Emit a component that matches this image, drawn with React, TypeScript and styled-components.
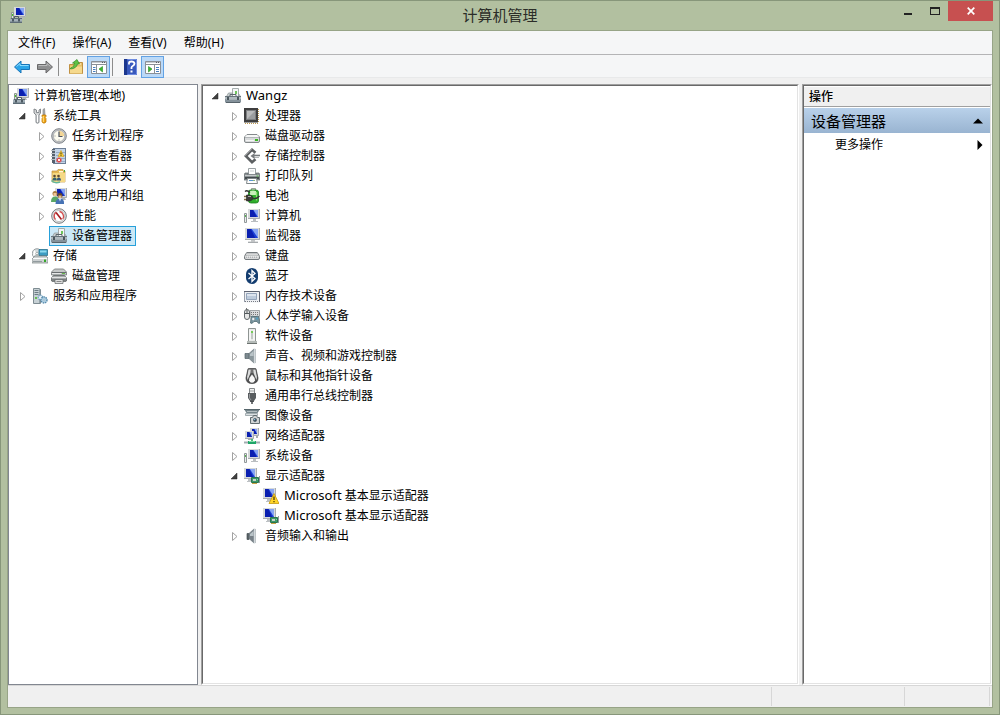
import React from "react";
import styled, { createGlobalStyle } from "styled-components";

const GlobalStyle = createGlobalStyle`
  *, *::before, *::after { box-sizing: border-box; }
  body {
    margin: 0;
    background: #b2c0a0;
    color: #000;
    font-family: "Noto Sans", "Noto Sans CJK SC", sans-serif;
    font-size: 12px;
    line-height: 20px;
  }
  button { font: inherit; color: inherit; background: none; border: 0; padding: 0; margin: 0; }
  h1, h2, ul { margin: 0; padding: 0; font: inherit; list-style: none; }
  svg { display: block; flex: none; }
`;

/* ---------- window frame ---------- */

const Frame = styled.div`
  display: flex;
  flex-direction: column;
  min-height: 100vh;
  padding: 0 6px 6px;
  border: 1px solid #87967a;
  background: #b2c0a0;
`;

const TitleBar = styled.header`
  display: grid;
  grid-template-columns: 1fr auto 1fr;
  height: 29px;
`;

const AppMark = styled.div`
  padding: 6px 0 0 3px;
`;

const Title = styled.h1`
  font-size: 15px;
  line-height: 28px;
  color: #2b2d28;
`;

const Caption = styled.div`
  display: flex;
  justify-content: flex-end;
`;

const CaptionButton = styled.button<{ $close?: boolean }>`
  display: flex;
  align-items: center;
  justify-content: center;
  width: ${(p) => (p.$close ? 45 : 27)}px;
  height: 20px;
  background: ${(p) => (p.$close ? "#c75050" : "transparent")};
`;

const Body = styled.div`
  flex: 1;
  display: flex;
  flex-direction: column;
  border: 1px solid #97a487;
  background: #f0f0f0;
`;

const MenuBar = styled.nav`
  display: flex;
  gap: 1px;
  height: 24px;
  padding: 0 2px;
  border-bottom: 1px solid #b4b4b6;
  background: #f5f6f7;
`;

const MenuButton = styled.button`
  padding: 0 8px;
  line-height: 24px;
`;

const ToolBar = styled.div`
  display: flex;
  align-items: flex-start;
  height: 23px;
  padding: 1px 2px 0;
  background: #f5f6f7;
  box-shadow: inset 0 -1px #e8e9ea;
`;

const ToolButton = styled.button<{ $on?: boolean }>`
  display: flex;
  align-items: center;
  justify-content: center;
  width: 23px;
  height: 22px;
  border: 1px solid ${(p) => (p.$on ? "#62a2e4" : "transparent")};
  background: ${(p) => (p.$on ? "#bbd9f7" : "transparent")};
`;

const ToolDivider = styled.span`
  width: 1px;
  height: 18px;
  margin: 2px 5px 0 2px;
  background: #8c8c8c;
`;

/* ---------- work area ---------- */

const Workspace = styled.div`
  flex: 1;
  display: flex;
  gap: 3px;
  padding-top: 6px;
`;

const SidePane = styled.nav`
  width: 190px;
  flex: none;
  padding: 1px 2px;
  border: 1px solid #828790;
  background: #fff;
`;

const SunkenPane = styled.section<{ $narrow?: boolean }>`
  flex: ${(p) => (p.$narrow ? "none" : "1")};
  width: ${(p) => (p.$narrow ? "190px" : "auto")};
  border: 1px solid;
  border-color: #a0a0a0 #fff #fff #a0a0a0;
  background: #fff;
`;

const SunkenInner = styled.div<{ $padded?: boolean }>`
  height: 100%;
  padding: 0 ${(p) => (p.$padded ? 1 : 0)}px;
  border: 1px solid;
  border-color: #696969 #e3e3e3 #e3e3e3 #696969;
`;

const Row = styled.div`
  display: flex;
  height: 20px;
`;

const Twisty = styled.button<{ $level: number }>`
  width: 19px;
  height: 20px;
  padding-left: 8px;
  margin-left: ${(p) => p.$level * 19}px;
`;

const TwistySpace = styled.span<{ $level: number }>`
  width: 19px;
  margin-left: ${(p) => p.$level * 19}px;
`;

const Label = styled.span<{ $selected?: boolean }>`
  display: flex;
  align-items: center;
  gap: 5px;
  height: 20px;
  padding: 0 3px 0 1px;
  line-height: 18px;
  white-space: nowrap;
  border: 1px solid ${(p) => (p.$selected ? "#26a0da" : "transparent")};
  background: ${(p) => (p.$selected ? "#cbe8f6" : "transparent")};
`;

const Latin = styled.span`
  font-size: 13px;
  line-height: 1;
`;

/* ---------- actions pane ---------- */

const ActionsTitle = styled.h2`
  height: 21px;
  padding: 0 5px;
  line-height: 20px;
  font-weight: 500;
  border-top: 1px solid #fff;
  border-bottom: 1px solid #a0a0a0;
  background: #f0f0f0;
`;

const ActionGroup = styled.button`
  display: flex;
  align-items: center;
  justify-content: space-between;
  width: 100%;
  height: 25px;
  margin-top: 1px;
  padding: 0 7px;
  font-size: 15px;
  background: linear-gradient(#b9d1ea, #99b4d1);
`;

const ActionItem = styled.button`
  display: flex;
  align-items: center;
  justify-content: space-between;
  width: 100%;
  height: 24px;
  padding: 0 7px 0 31px;
`;

const StatusBar = styled.footer`
  display: flex;
  justify-content: flex-end;
  height: 22px;
  padding: 1px 2px 1px 0;
  border-top: 1px solid #d7d7d7;
`;

const StatusCell = styled.span<{ $wide?: boolean }>`
  width: ${(p) => (p.$wide ? 133 : 86)}px;
  border-left: ${(p) => (p.$wide ? "1px solid #d7d7d7" : "0")};
  border-right: ${(p) => (p.$wide ? "0" : "1px solid #d7d7d7")};
  box-shadow: ${(p) => (p.$wide ? "none" : "inset 1px 0 #d7d7d7")};
`;

/* ---------- icons ---------- */

const Svg = ({ children }: { children: React.ReactNode }) => (
  <svg width="16" height="16" viewBox="0 0 16 16" aria-hidden="true">
    {children}
  </svg>
);

const Screen = ({ x = 0, y = 0, w = 12, h = 9 }: { x?: number; y?: number; w?: number; h?: number }) => (
  <g>
    <rect x={x} y={y} width={w} height={h} fill="#d6d9db" />
    <path d={`M${x} ${y + h - 0.5}H${x + w - 0.5}V${y}`} stroke="#a9adb0" fill="none" />
    <rect x={x + 2} y={y + 1} width={w - 4} height={h - 3} fill="#1c3fd6" />
    <path d={`M${x + w * 0.45} ${y + 1}H${x + w - 2}V${y + h - 2}Z`} fill="#86a4f2" />
    <path d={`M${x + 2} ${y + 1}h${w * 0.25}l${w * 0.3} ${h - 3}H${x + 2}z`} fill="#0a1fb0" />
  </g>
);

const ComputerManage = () => (
  <Svg>
    <Screen x={4} y={0} w={12} h={10} />
    <path d="M9 10h4l1 2H8z" fill="#b4b8b8" />
    <path d="M1.500 5.500h2v6h-2z" fill="#dce2dc" stroke="#8d9791" />
    <path d="M2 7h1v2H2z" fill="#46c12a" />
    <path d="M4.500 11V9.500h4V11" fill="none" stroke="#525d67" />
    <path d="M1 11h11v4.500H0V12z" fill="#8796a0" />
    <path d="M1 11.500h11M0 15.500h12" stroke="#5d6c76" />
    <path d="M0 13h12" stroke="#c2ccd2" />
    <path d="M2 12h2v2.500H2zM8 12h2v2.500H8z" fill="#4d5a63" />
  </Svg>
);

const Tools = () => (
  <Svg>
    <path d="M2 1v4l2 2v7.500q1.500 1.500 3 0V7l1.500-2V1L7 2v2.500H4.500V2z" fill="#d4d6d7" stroke="#7b8084" strokeWidth=".9" />
    <path d="M5.500 7v7" stroke="#fff" />
    <path d="M11 1.500l1.500-1L13 6.500h-2z" fill="#aeb2b5" stroke="#777" strokeWidth=".6" />
    <path d="M10 7h4v1.500l-.8 1 .8 1V14q-2 2.500-4 0v-3.500l.8-1-.8-1z" fill="#f0a618" stroke="#b77307" strokeWidth=".7" />
    <path d="M11.300 8v6" stroke="#ffe082" />
  </Svg>
);

const Clock = () => (
  <Svg>
    <circle cx="8" cy="8" r="7.300" fill="#c2c5c8" stroke="#80858a" />
    <circle cx="8" cy="8" r="5.600" fill="#fdfcf0" stroke="#a0a4a8" strokeWidth=".7" />
    <path d="M8 8V2.700A5.300 5.300 0 0 1 13.300 8z" fill="#f3d696" />
    <path d="M8 3.500V8.500h3.500" fill="none" stroke="#4a5160" strokeWidth="1.200" />
    <path d="M3.500 8h1M8 11.500v1" stroke="#888" />
  </Svg>
);

const EventLog = () => (
  <Svg>
    <rect x="2.500" y=".5" width="12" height="15" fill="#c3d4e8" stroke="#6d7f96" />
    <path d="M1 1h3v14H1z" fill="#56616e" />
    <path d="M0 2.500h4M0 5.500h4M0 8.500h4M0 11.500h4" stroke="#b8bfc7" />
    <path d="M5 4.500h9M5 7.500h9M5 10.500h9M5 13.500h9" stroke="#8299b7" strokeWidth=".7" />
    <path d="M10 2.500L13 8.500H7z" fill="#ffd437" stroke="#d09a20" strokeWidth=".6" />
    <path d="M10 4.500v2m0 .7v.8" stroke="#332d10" />
    <circle cx="8" cy="12" r="2.600" fill="#d94848" />
    <path d="M6.800 10.800l2.400 2.400m0-2.400l-2.400 2.400" stroke="#fff" strokeWidth=".9" />
  </Svg>
);

const SharedFolder = () => (
  <Svg>
    <path d="M1 3h5l1-1.500h5V3h2v11H1z" fill="#e5b955" stroke="#be9444" strokeWidth=".7" />
    <path d="M1.500 5h12.500v9H1.500z" fill="#f5d985" />
    <path d="M8 3h4v1.500H8z" fill="#fff8dc" />
    <path d="M13 2h1v2h-1z" fill="#4ab236" />
    <circle cx="3.500" cy="8" r="1.300" fill="#5b4a35" />
    <circle cx="7.500" cy="8" r="1.300" fill="#5f482f" />
    <path d="M1.500 12.500q0-3 2.200-3t2 3z" fill="#35636e" />
    <path d="M5.800 12.500q0-3 2-3t2.200 3z" fill="#33567c" />
    <path d="M.5 12.500q3 3.500 8.500 1.500" fill="none" stroke="#63b79b" strokeWidth="1.500" />
  </Svg>
);

const Users = () => (
  <Svg>
    <Screen x={4} y={0} w={12} h={10} />
    <path d="M11 10h3l1 2h-5z" fill="#aeb4b8" />
    <circle cx="4" cy="5.500" r="2.500" fill="#aa7d43" />
    <path d="M2.500 5h3v3h-3z" fill="#efc596" />
    <path d="M0 14q0-5.500 4-5.500T8 14z" fill="#5aa765" />
    <circle cx="9" cy="7.500" r="2.500" fill="#664a2c" />
    <path d="M7.500 7.500h3v2.500h-3z" fill="#e6b886" />
    <path d="M4.500 16q0-5.500 4.500-5.500T13 16z" fill="#4672b4" />
    <path d="M8 10.500h2l-1 3z" fill="#fff" />
  </Svg>
);

const Gauge = () => (
  <Svg>
    <circle cx="8" cy="8" r="7.300" fill="#e8e9e9" stroke="#74787b" />
    <circle cx="8" cy="8" r="5.600" fill="#fff" stroke="#a3a6a7" strokeWidth=".6" />
    <path d="M4.500 11.500A5 5 0 0 1 5 4.300M8.500 3.500a5 5 0 0 1 3.300 7.500" fill="none" stroke="#d34b4b" strokeWidth="1.300" />
    <path d="M5 4.500L10.500 11.500" stroke="#a61d20" strokeWidth="1.600" />
  </Svg>
);

const DeviceHost = () => (
  <Svg>
    <path d="M7.500.5h6v8h-6z" fill="#f4f6f6" stroke="#a5adad" />
    <path d="M10 3h2v3h-2z" fill="#6dc55b" />
    <path d="M9 6.500h1" stroke="#828c8d" />
    <path d="M1.500 8.500l2-3.500h4v3.500zM13.500 5.500l2 3h-2z" fill="#ccd2d3" stroke="#8e9899" strokeWidth=".8" />
    <path d="M5 8V6.500h6V8" fill="none" stroke="#5c676c" />
    <path d="M0 8h16v6.500H0z" fill="#84919a" />
    <path d="M0 8.500h16" stroke="#68747b" />
    <path d="M0 10h16" stroke="#dce2e3" />
    <path d="M1 11.500h14" stroke="#a6b1b5" />
    <path d="M2 9h2v3H2zM12 9h2v3h-2z" fill="#4b575d" />
    <path d="M1 14.500h14" stroke="#57636a" />
  </Svg>
);

const Storage = () => (
  <Svg>
    <circle cx="5" cy="5.500" r="4.800" fill="#d6dbdc" stroke="#858d8f" strokeWidth=".8" />
    <path d="M2 2l3 3.500L1 8z" fill="#fff" />
    <circle cx="5" cy="5.500" r="1.300" fill="#fff" stroke="#88908f" strokeWidth=".7" />
    <path d="M7 1.500h8.500v6H7z" fill="#3d9cc2" stroke="#24718f" strokeWidth=".8" />
    <path d="M8 2.500h6.500v2H8z" fill="#8ed9ee" />
    <path d="M3 8h11l2 2v5H0v-4z" fill="#cdd1d2" stroke="#798183" strokeWidth=".7" />
    <path d="M1 10.500h14" stroke="#fafbfb" />
    <path d="M1 13.500h9" stroke="#929b9e" />
    <path d="M12 11.500h2v2.500h-2z" fill="#35a72a" />
  </Svg>
);

const Disks = () => (
  <Svg>
    <path d="M3.500 1h9L15.500 4v3H.5V4z" fill="#c6c8c8" stroke="#75797a" strokeWidth=".8" />
    <path d="M1 4.500h14" stroke="#6a6e70" />
    <path d="M1 5.500h9" stroke="#e6e7e7" />
    <path d="M2.500 7.500h11l2 2.500v3H.5v-3z" fill="#a7aaab" stroke="#5f6465" strokeWidth=".8" />
    <path d="M1 9.500h14" stroke="#e2e3e3" />
    <path d="M11 5.500h3" stroke="#67b94c" />
    <path d="M1 11h14v3H1z" fill="#7d8182" />
    <path d="M4 11.500h8v4H4z" fill="#dfe0e0" stroke="#606465" strokeWidth=".7" />
    <path d="M5.500 13.500h5" stroke="#888" />
  </Svg>
);

const Services = () => (
  <Svg>
    <path d="M1.500.5h6l1 1v14h-7z" fill="#c7d1d5" stroke="#7e8c92" />
    <path d="M2.500 2.500h4M2.500 4.500h4M2.500 6.500h4" stroke="#6d7d85" />
    <path d="M7.500 1v14" stroke="#96a4aa" />
    <path d="M3 9h2v2H3z" fill="#66bd54" />
    <circle cx="8.500" cy="9.500" r="2.300" fill="#e7f1f8" stroke="#6e9fbe" strokeWidth="1.200" strokeDasharray="1.300 .6" />
    <circle cx="12" cy="12" r="3" fill="#b8d6e8" stroke="#578bac" strokeWidth="1.400" strokeDasharray="1.500 .7" />
    <circle cx="12" cy="12" r="1" fill="#fff" stroke="#578bac" strokeWidth=".5" />
  </Svg>
);

const Cpu = () => (
  <Svg>
    <path d="M14.500 1v14M1 15.500h14" fill="none" stroke="#bd9950" strokeDasharray="1 1" />
    <rect x="0" y="0" width="14" height="14.500" fill="#3e3e3f" />
    <rect x="2.500" y="2.500" width="9" height="9" fill="#9b9d9f" stroke="#7d7f81" />
    <path d="M3 3h8L3 11z" fill="#b9babb" />
  </Svg>
);

const Drive = () => (
  <Svg>
    <path d="M3 6.500h10l2.500 2.500v4q0 1.500-1.500 1.500H2Q.5 14.500.5 13V9z" fill="#d8dadb" stroke="#84898b" />
    <path d="M3 7h10l2 2H1z" fill="#f7f8f8" />
    <path d="M1 9.500h14" stroke="#b2b6b8" />
    <path d="M2 12.500h8" stroke="#f5f5f5" />
    <path d="M11 11h3v2h-3z" fill="#38b821" />
  </Svg>
);

const Controller = () => (
  <Svg>
    <path d="M11.500 4.800L8 1.800 1.800 8 8 14.200l3.500-3" fill="none" stroke="#5c5f61" strokeWidth="2.600" />
    <path d="M8 1L1 8" fill="none" stroke="#a2a5a6" strokeWidth=".8" />
    <path d="M9 7.500h7" stroke="#777b7d" strokeWidth="1.600" />
    <path d="M10 9.500h5" stroke="#b4b7b8" />
    <path d="M6.500 8l4-3v6z" fill="#777a7c" />
  </Svg>
);

const Printer = () => (
  <Svg>
    <path d="M4.500.5h7v6h-7z" fill="#fdfdfd" stroke="#9ba2a5" />
    <path d="M6 3h4" stroke="#ccd1d4" />
    <path d="M1 5h3v2h8V5h3l1 2v5H0V7z" fill="#8a9194" stroke="#5d6568" strokeWidth=".7" />
    <path d="M1 7.500h14" stroke="#c4c8c9" />
    <path d="M1 10h14" stroke="#42494c" strokeWidth="2" />
    <path d="M3.500 10.500h9l1 5h-11z" fill="#fff" stroke="#7f8789" />
    <path d="M5 12.500h4" stroke="#5895cf" />
    <path d="M9 12.500h2" stroke="#8bb77e" />
    <path d="M12.500 8h2" stroke="#4cac3d" />
  </Svg>
);

const Battery = () => (
  <Svg>
    <path d="M7.500.5h4v2h-4z" fill="#d7dcd5" stroke="#7a8475" strokeWidth=".7" />
    <path d="M4.500 4q0-2 2-2H12q2.500 0 2.500 2v9q0 2-2.500 2H7q-2.500 0-2.500-2z" fill="#2fae2c" stroke="#1d8220" strokeWidth=".8" />
    <path d="M6 3q3-.8 6 0v4H6z" fill="#c9f0ba" />
    <path d="M12.500 4v8.500" stroke="#8ddd72" strokeWidth="1.300" />
    <path d="M0 8.500h3M0 11.500h3" stroke="#827145" strokeWidth="1.300" />
    <path d="M2.500 7h3.500q3 1 3 3t-3 3H2.500z" fill="#3c3c39" stroke="#1e201e" strokeWidth=".6" />
    <path d="M4 8.500h3" stroke="#a7aaa5" />
    <path d="M9 10.500q4 .5 6.500-2.500M1 3.500q2-2 5 1" fill="none" stroke="#333" strokeWidth="1.300" />
  </Svg>
);

const Computer = () => (
  <Svg>
    <Screen x={4} y={1} w={12} h={10} />
    <path d="M9 11h3v2h2v1H7v-1h2z" fill="#babec1" />
    <path d="M.5 5.500h2v9h-2z" fill="#e9ecec" stroke="#92999b" />
    <path d="M1 7h1v2H1z" fill="#58b34c" />
  </Svg>
);

const Monitor = () => (
  <Svg>
    <Screen x={1} y={0} w={15} h={12} />
    <path d="M7 12h4v1.500h3V15H4v-1.500h3z" fill="#c2c5c7" />
    <path d="M4 14.500h10" stroke="#a7abae" />
  </Svg>
);

const Keyboard = () => (
  <Svg>
    <path d="M3 4.500h10q1 0 2.500 4v1.500q0 1.500-1.500 1.500H2Q.5 11.500.5 10V8.500Q2 4.500 3 4.500z" fill="#d8d9da" stroke="#757a7d" />
    <path d="M3.500 6h9.500M2.500 7.500h11M2 9h12" stroke="#8a8e90" strokeDasharray="1 1" />
    <path d="M3 6.800h10M2 8.300h12" stroke="#fff" strokeWidth=".5" />
  </Svg>
);

const Bluetooth = () => (
  <Svg>
    <rect x="2" y="0" width="12" height="16" rx="6" fill="#143d70" />
    <path d="M4.500 5l6.500 5.500L8 13.500v-11l3 3L4.500 11" fill="none" stroke="#fff" strokeWidth="1.300" />
  </Svg>
);

const Memory = () => (
  <Svg>
    <path d="M.5 3.500h15v11H.5z" fill="#eef0f3" />
    <path d="M0 3.500h15.500V14" fill="none" stroke="#5d6270" />
    <path d="M.5 4v10" stroke="#9aa0ac" />
    <path d="M2.500 5.500h10v6h-10z" fill="#bdcbdc" stroke="#94a4ba" />
    <path d="M3 6h9v2H3z" fill="#dce4ee" />
    <path d="M1 13.500h14" stroke="#777b84" strokeDasharray="1 1" />
  </Svg>
);

const Hid = () => (
  <Svg>
    <path d="M6 2.500h9.500v6H6z" fill="#dadcdd" stroke="#8c9193" strokeWidth=".8" />
    <path d="M7 4.500h8M7 6.500h8" stroke="#777" strokeDasharray="1 1" />
    <path d="M2.500 0v2" stroke="#777" />
    <rect x=".5" y="1.500" width="5" height="10" rx="2.500" fill="#e5e6e6" stroke="#62686b" />
    <path d="M1 5.500h4M3 2v3.500" stroke="#52585b" />
    <path d="M7 9q1-1.500 3-.5h2q2-1 3 .5l1 6q-1.500 1.500-3-1.500h-3Q8 16.500 6.500 15z" fill="#78949e" stroke="#476169" strokeWidth=".7" />
    <path d="M8 11h2.500M9.200 9.800v2.500" stroke="#fff" />
    <circle cx="13" cy="10.500" r=".9" fill="#4aa2cb" />
  </Svg>
);

const Software = () => (
  <Svg>
    <path d="M4.500.5h7v13h-7z" fill="#e7e9e8" stroke="#8f9593" />
    <path d="M6 2v10M10 2v10" stroke="#fff" />
    <path d="M7 3h2v8H7z" fill="#c3c9c5" />
    <path d="M7 3h2v2H7z" fill="#75ca57" />
    <path d="M3 13h10v2H3z" fill="#b4bab7" />
    <path d="M3 15.500h10" stroke="#6d7370" />
  </Svg>
);

const Speaker = ({ faded }: { faded?: boolean }) => (
  <Svg>
    {!faded && <path d="M1 5.500h4v5H1z" fill="#7d898f" stroke="#536168" strokeWidth=".7" />}
    {faded && <path d="M3 5.500h2v6H3z" fill="#555e62" stroke="#495156" strokeWidth=".7" />}
    <path d="M5 5.500L10 1v14l-5-4.500z" fill={faded ? "#778087" : "#8b979c"} stroke="#6d797e" strokeWidth=".7" />
    <path d="M6 6l3.500-3v5H6z" fill="#b9c3c7" />
    <path d="M10.500.5v15" stroke="#d3d9dc" strokeWidth="1.500" />
    <path d="M11.500 1v14" stroke="#98a3a8" strokeWidth=".6" />
  </Svg>
);

const Mouse = () => (
  <Svg>
    <path d="M4 .8Q8-.5 12 .8l2 9.200q0 5.500-6 5.500T2 10z" fill="#505152" stroke="#3a3b3c" strokeWidth=".7" />
    <path d="M4.500 1.500h2.300L6.500 5 3.500 12q-.8-3 0-5zM9.200 1.500h2.300l1 5.500q.8 2 0 5L9.500 5z" fill="#dcdddd" />
    <path d="M8 6.500q3 3 3 6-1 2.200-3 2.200t-3-2.200q0-3 3-6z" fill="#f7f7f7" />
    <path d="M8 1v4" stroke="#8a8b8c" strokeWidth="1.200" />
  </Svg>
);

const Usb = () => (
  <Svg>
    <path d="M5.500.5h5v5h-5z" fill="#f0f1f1" stroke="#85898b" />
    <path d="M7 2v2M9 2v2" stroke="#a0a4a5" />
    <path d="M4 5h8v5l-2 3v1H6v-1l-2-3z" fill="#595d60" />
    <path d="M5.500 6v4l1.500 2" fill="none" stroke="#96999b" />
    <path d="M8 13v3" stroke="#404447" strokeWidth="1.500" />
  </Svg>
);

const Imaging = () => (
  <Svg>
    <path d="M0 1h16l-2.500 4H2.500z" fill="#74848a" />
    <path d="M0 1.500h16" stroke="#56656b" />
    <path d="M3 3.500h10" stroke="#b4bec1" />
    <path d="M1.500 5.500h12v2h-12z" fill="#dae0e2" stroke="#849195" strokeWidth=".7" />
    <path d="M6.500 9.500h2l1-2h3l1 2h2v6h-9z" fill="#cbd0d1" stroke="#626d71" />
    <circle cx="11" cy="12" r="2.400" fill="#3c4d58" stroke="#f2f2f2" strokeWidth=".8" />
    <circle cx="10.500" cy="11.500" r=".8" fill="#90c5df" />
  </Svg>
);

const Network = () => (
  <Svg>
    <Screen x={6} y={0} w={9} h={8} />
    <Screen x={1} y={3} w={9} h={8} />
    <path d="M4 11h3v1H4zM12 8h2v2h-2z" fill="#a8adb0" />
    <path d="M7 11h2v2H7z" fill="#4cbd75" />
    <path d="M0 14.500h16" stroke="#a3adb1" strokeWidth="2" />
    <path d="M4 13h8v3H4z" fill="#1ea568" />
    <path d="M5 13.500h6" stroke="#83dcaa" />
  </Svg>
);

const Display = ({ warn }: { warn?: boolean }) => (
  <Svg>
    <Screen x={0} y={0} w={13} h={11} />
    <path d="M4 11h4v2h2v1H3v-1h1z" fill="#bdc1c4" />
    {warn ? (
      <>
        <path d="M11 5.500l5 10H6z" fill="#ffd529" stroke="#c69a11" strokeWidth=".8" />
        <path d="M11 8.500v3.500m0 1v1.300" stroke="#433306" strokeWidth="1.200" />
      </>
    ) : (
      <>
        <path d="M15.500 8v7" stroke="#929a9c" />
        <path d="M7.500 9.500h7v5h-7z" fill="#3d9a68" stroke="#2a7450" />
        <path d="M9 11h3v2H9z" fill="#c9d1cc" />
        <path d="M13 11h1v1h-1z" fill="#7ddf9a" />
        <path d="M8 15.500h5" stroke="#c6a243" />
      </>
    )}
  </Svg>
);

const ArrowIcon = ({ forward }: { forward?: boolean }) => (
  <Svg>
    {forward ? (
      <>
        <path d="M15.500 8L9 2v3.500H.5v5H9V14z" fill="#8e8f90" stroke="#69696a" />
        <path d="M1.500 6.500H10V4.500l3.500 3" fill="none" stroke="#bbbcbc" />
      </>
    ) : (
      <>
        <path d="M.5 8L7 2v3.500h8.500v5H7V14z" fill="#2ba4e7" stroke="#1874b8" />
        <path d="M2.500 7.500L6 4.500v2h8.500" fill="none" stroke="#8bdcff" />
      </>
    )}
  </Svg>
);

const FolderUp = () => (
  <Svg>
    <path d="M1.500 5.500h4l1-2h8v11h-13z" fill="#e9bf68" stroke="#c09142" />
    <path d="M2 7.500h12v7H2z" fill="#f5d98d" />
    <path d="M9 5h4" stroke="#fff5cf" />
    <path d="M2.500 9Q6.500 8.500 6.500 4H4.500l4.500-3.500 2.500 4.500H9.500Q8.500 9.500 2.500 10z" fill="#5fc246" stroke="#318c25" strokeWidth=".7" />
  </Svg>
);

const PaneIcon = ({ right }: { right?: boolean }) => (
  <Svg>
    <path d="M.5 2.500h15v12H.5z" fill="#fff" stroke="#8a9098" />
    <path d="M1 3.500h14" stroke="#c6cacf" />
    <path d="M1 5.500h14" stroke="#8a9098" />
    <path d="M11 3.500h1M13 3.500h1" stroke="#575d65" />
    {right ? (
      <>
        <path d="M9.500 6v8" stroke="#8a9098" />
        <path d="M11 8.500h3M11 10.500h3M11 12.500h3" stroke="#477fc0" />
        <path d="M3.500 7.500L7 10l-3.500 3z" fill="#3bb62f" stroke="#258b22" strokeWidth=".6" />
      </>
    ) : (
      <>
        <path d="M5.500 6v8" stroke="#8a9098" />
        <path d="M2 8.500h2.500M2 10.500h2.500M2 12.500h2.500" stroke="#477fc0" />
        <path d="M11.500 7.500L8 10l3.500 3z" fill="#3bb62f" stroke="#258b22" strokeWidth=".6" />
      </>
    )}
  </Svg>
);

const HelpIcon = () => (
  <Svg>
    <path d="M2 0h13v16H2z" fill="#3859bd" />
    <path d="M2 0h3v16H2z" fill="#1c378e" />
    <path d="M5.500.5h9v15h-9" fill="none" stroke="#6f8ce0" />
    <path d="M7 5.500V4q0-1.500 2.500-1.500T12.500 4.500q0 1.500-1.500 2.300T9.500 8.500V10" fill="none" stroke="#fff" strokeWidth="1.800" />
    <path d="M8.500 11.500h2v2h-2z" fill="#fff" />
  </Svg>
);

/* ---------- data ---------- */

type Node = {
  name: string;
  latin?: string;
  icon: React.ReactNode;
  level: number;
  state?: "open" | "closed";
  selected?: boolean;
};

const consoleTree: Node[] = [
  { name: "系统工具", icon: <Tools />, level: 0, state: "open" },
  { name: "任务计划程序", icon: <Clock />, level: 1, state: "closed" },
  { name: "事件查看器", icon: <EventLog />, level: 1, state: "closed" },
  { name: "共享文件夹", icon: <SharedFolder />, level: 1, state: "closed" },
  { name: "本地用户和组", icon: <Users />, level: 1, state: "closed" },
  { name: "性能", icon: <Gauge />, level: 1, state: "closed" },
  { name: "设备管理器", icon: <DeviceHost />, level: 1, selected: true },
  { name: "存储", icon: <Storage />, level: 0, state: "open" },
  { name: "磁盘管理", icon: <Disks />, level: 1 },
  { name: "服务和应用程序", icon: <Services />, level: 0, state: "closed" },
];

const deviceTree: Node[] = [
  { name: "", latin: "Wangz", icon: <DeviceHost />, level: 0, state: "open" },
  { name: "处理器", icon: <Cpu />, level: 1, state: "closed" },
  { name: "磁盘驱动器", icon: <Drive />, level: 1, state: "closed" },
  { name: "存储控制器", icon: <Controller />, level: 1, state: "closed" },
  { name: "打印队列", icon: <Printer />, level: 1, state: "closed" },
  { name: "电池", icon: <Battery />, level: 1, state: "closed" },
  { name: "计算机", icon: <Computer />, level: 1, state: "closed" },
  { name: "监视器", icon: <Monitor />, level: 1, state: "closed" },
  { name: "键盘", icon: <Keyboard />, level: 1, state: "closed" },
  { name: "蓝牙", icon: <Bluetooth />, level: 1, state: "closed" },
  { name: "内存技术设备", icon: <Memory />, level: 1, state: "closed" },
  { name: "人体学输入设备", icon: <Hid />, level: 1, state: "closed" },
  { name: "软件设备", icon: <Software />, level: 1, state: "closed" },
  { name: "声音、视频和游戏控制器", icon: <Speaker />, level: 1, state: "closed" },
  { name: "鼠标和其他指针设备", icon: <Mouse />, level: 1, state: "closed" },
  { name: "通用串行总线控制器", icon: <Usb />, level: 1, state: "closed" },
  { name: "图像设备", icon: <Imaging />, level: 1, state: "closed" },
  { name: "网络适配器", icon: <Network />, level: 1, state: "closed" },
  { name: "系统设备", icon: <Computer />, level: 1, state: "closed" },
  { name: "显示适配器", icon: <Display />, level: 1, state: "open" },
  { name: " 基本显示适配器", latin: "Microsoft", icon: <Display warn />, level: 2 },
  { name: " 基本显示适配器", latin: "Microsoft", icon: <Display />, level: 2 },
  { name: "音频输入和输出", icon: <Speaker faded />, level: 1, state: "closed" },
];

const menus = ["文件(F)", "操作(A)", "查看(V)", "帮助(H)"];

const TwistyMark = ({ open }: { open: boolean }) => (
  <svg width="8" height="20" viewBox="0 0 8 20" aria-hidden="true">
    {open ? (
      <path d="M6 7v6H0z" fill="#404040" stroke="#262626" strokeWidth=".5" />
    ) : (
      <path d="M1.500 6.500v8L6 10.500z" fill="#fff" stroke="#a2a2a2" />
    )}
  </svg>
);

const Tree = ({ nodes, label }: { nodes: Node[]; label: string }) => (
  <div role="tree" aria-label={label}>
    {nodes.map((n, i) => (
      <Row
        key={i}
        role="treeitem"
        aria-level={n.level + 1}
        aria-expanded={n.state ? n.state === "open" : undefined}
        aria-selected={!!n.selected}
      >
        {n.state ? (
          <Twisty type="button" $level={n.level} aria-label={n.state === "open" ? "折叠" : "展开"}>
            <TwistyMark open={n.state === "open"} />
          </Twisty>
        ) : (
          <TwistySpace $level={n.level} />
        )}
        <Label $selected={n.selected}>
          {n.icon}
          <span>
            {n.latin && <Latin>{n.latin}</Latin>}
            {n.name}
          </span>
        </Label>
      </Row>
    ))}
  </div>
);

export default function App() {
  return (
    <Frame>
      <GlobalStyle />
      <TitleBar>
        <AppMark>
          <ComputerManage />
        </AppMark>
        <Title>计算机管理</Title>
        <Caption>
          <CaptionButton type="button" aria-label="最小化">
            <svg width="10" height="10" viewBox="0 0 10 10">
              <path d="M1 7h8v2H1z" fill="#222" />
            </svg>
          </CaptionButton>
          <CaptionButton type="button" aria-label="最大化">
            <svg width="10" height="8" viewBox="0 0 10 8">
              <path d="M0 0h10v8H0zM1 2v5h8V2z" fill="#222" fillRule="evenodd" />
            </svg>
          </CaptionButton>
          <CaptionButton type="button" $close aria-label="关闭">
            <svg width="8" height="8" viewBox="0 0 8 8">
              <path d="M.7.7l6.600 6.600M7.300.7L.7 7.300" stroke="#fff" strokeWidth="1.700" />
            </svg>
          </CaptionButton>
        </Caption>
      </TitleBar>
      <Body>
        <MenuBar aria-label="菜单">
          {menus.map((m) => (
            <MenuButton type="button" key={m}>
              {m}
            </MenuButton>
          ))}
        </MenuBar>
        <ToolBar role="toolbar" aria-label="工具栏">
          <ToolButton type="button" aria-label="后退"><ArrowIcon /></ToolButton>
          <ToolButton type="button" aria-label="前进"><ArrowIcon forward /></ToolButton>
          <ToolDivider />
          <ToolButton type="button" aria-label="上移一级"><FolderUp /></ToolButton>
          <ToolButton type="button" $on aria-label="显示控制台树"><PaneIcon /></ToolButton>
          <ToolDivider />
          <ToolButton type="button" aria-label="帮助"><HelpIcon /></ToolButton>
          <ToolButton type="button" $on aria-label="显示操作窗格"><PaneIcon right /></ToolButton>
        </ToolBar>
        <Workspace>
          <SidePane aria-label="控制台树">
            <Row>
              <Label>
                <ComputerManage />
                <span>计算机管理(本地)</span>
              </Label>
            </Row>
            <Tree nodes={consoleTree} label="计算机管理(本地)" />
          </SidePane>
          <SunkenPane>
            <SunkenInner $padded>
              <Tree nodes={deviceTree} label="设备" />
            </SunkenInner>
          </SunkenPane>
          <SunkenPane $narrow>
            <SunkenInner>
              <ActionsTitle>操作</ActionsTitle>
              <ActionGroup type="button">
                设备管理器
                <svg width="10" height="6" viewBox="0 0 10 6" aria-hidden="true">
                  <path d="M0 5.500L5 .5l5 5z" />
                </svg>
              </ActionGroup>
              <ActionItem type="button">
                更多操作
                <svg width="6" height="10" viewBox="0 0 6 10" aria-hidden="true">
                  <path d="M.5 0l5 5-5 5z" />
                </svg>
              </ActionItem>
            </SunkenInner>
          </SunkenPane>
        </Workspace>
        <StatusBar>
          <StatusCell $wide />
          <StatusCell />
        </StatusBar>
      </Body>
    </Frame>
  );
}
